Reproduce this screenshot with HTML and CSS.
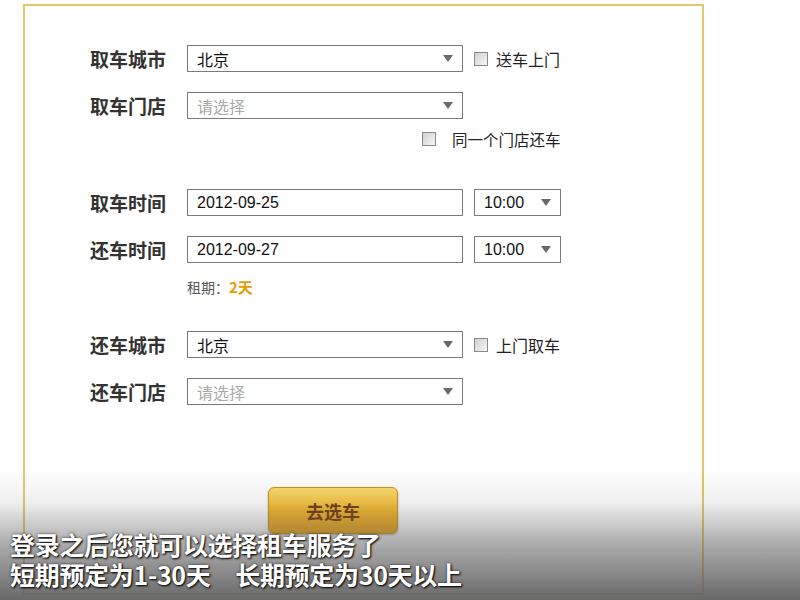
FILE: index.html
```html
<!DOCTYPE html>
<html lang="zh-CN">
<head>
    <meta charset="UTF-8">
    <title>租车预订</title>
    <link rel="stylesheet" href="styles.css">
</head>
<body>
    <div class="panel">
        <div class="row">
            <span class="label">取车城市</span>
            <div class="select wide"><span>北京</span><i class="arrow"></i></div>
            <label class="check"><span class="box"></span>送车上门</label>
        </div>
        <div class="row">
            <span class="label">取车门店</span>
            <div class="select wide placeholder"><span>请选择</span><i class="arrow"></i></div>
        </div>
        <div class="row same-store">
            <label class="check"><span class="box"></span><span class="gap">同一个门店还车</span></label>
        </div>

        <div class="row group">
            <span class="label">取车时间</span>
            <div class="input wide">2012-09-25</div>
            <div class="select time"><span>10:00</span><i class="arrow"></i></div>
        </div>
        <div class="row">
            <span class="label">还车时间</span>
            <div class="input wide">2012-09-27</div>
            <div class="select time"><span>10:00</span><i class="arrow"></i></div>
        </div>
        <div class="period">租期：<b>2天</b></div>

        <div class="row group2">
            <span class="label">还车城市</span>
            <div class="select wide"><span>北京</span><i class="arrow"></i></div>
            <label class="check"><span class="box"></span>上门取车</label>
        </div>
        <div class="row">
            <span class="label">还车门店</span>
            <div class="select wide placeholder"><span>请选择</span><i class="arrow"></i></div>
        </div>

        <button class="go">去选车</button>
    </div>

    <div class="caption">
        <p>登录之后您就可以选择租车服务了</p>
        <p>短期预定为1-30天　长期预定为30天以上</p>
    </div>
</body>
</html>
```

FILE: styles.css
```css
body {
    margin: 0;
    background: #fff;
    font-family: "Noto Sans CJK SC", sans-serif;
    width: 800px;
    height: 600px;
    overflow: hidden;
    position: relative;
}
.panel {
    margin: 4px 0 0 23px;
    width: 681px;
    height: 591px;
    box-sizing: border-box;
    border: 2px solid #e3c768;
    padding: 39px 0 0 65px;
}
.row {
    display: flex;
    align-items: center;
    height: 27px;
    margin-top: 20px;
}
.row:first-child {
    margin-top: 0;
}
.label {
    width: 97px;
    font-size: 19px;
    font-weight: bold;
    color: #333;
    line-height: 27px;
}
.select, .input {
    height: 27px;
    box-sizing: border-box;
    border: 1px solid #7a7a7a;
    display: flex;
    align-items: center;
    padding: 0 9px;
    font-family: "Liberation Sans", "Noto Sans CJK SC", sans-serif;
    font-size: 16px;
    color: #111;
}
.wide {
    width: 276px;
}
.select span {
    flex: 1;
}
.placeholder {
    color: #aaa;
}
.time {
    width: 87px;
    margin-left: 11px;
}
.arrow {
    width: 0;
    height: 0;
    border-left: 5px solid transparent;
    border-right: 5px solid transparent;
    border-top: 7px solid #6a6a6a;
}
.check {
    display: flex;
    align-items: center;
    margin-left: 11px;
    font-size: 16px;
    color: #222;
}
.box {
    width: 14px;
    height: 14px;
    box-sizing: border-box;
    border: 1px solid #8a8a8a;
    background: linear-gradient(135deg, #d0d0d0, #f6f6f6);
    margin-right: 8px;
}
.same-store {
    height: 20px;
    margin-top: 10px;
    padding-left: 332px;
}
.same-store .check {
    margin-left: 0;
    font-size: 15.5px;
}
.same-store .gap {
    margin-left: 8px;
}
.group {
    margin-top: 40px;
}
.period {
    margin: 14px 0 0 97px;
    height: 20px;
    line-height: 20px;
    font-size: 14px;
    color: #555;
}
.period b {
    color: #e59c00;
    font-size: 15px;
}
.group2 {
    margin-top: 34px;
}
.go {
    display: block;
    margin: 82px 0 0 178px;
    width: 130px;
    height: 47px;
    border: 1px solid #d0940f;
    border-radius: 6px;
    background: linear-gradient(#fcdc70, #f3b62a 50%, #eaa316);
    color: #6f3a0e;
    font-family: "Noto Sans CJK SC", sans-serif;
    font-size: 18px;
    font-weight: bold;
    box-shadow: 0 1px 2px rgba(0,0,0,0.3);
}
.caption {
    position: absolute;
    left: 0;
    right: 0;
    bottom: 0;
    height: 130px;
    box-sizing: border-box;
    padding: 0 0 11px 10px;
    display: flex;
    flex-direction: column;
    justify-content: flex-end;
    background: linear-gradient(rgba(96,96,96,0), rgba(96,96,96,0.1) 25%, rgba(96,96,96,0.5) 55%, rgba(96,96,96,0.95));
}
.caption p {
    margin: 0;
    color: #fff;
    font-size: 25px;
    font-weight: bold;
    line-height: 30px;
    letter-spacing: -0.3px;
    text-shadow: 1px 1px 2px #000, 0 0 3px rgba(0,0,0,0.6);
}
```
